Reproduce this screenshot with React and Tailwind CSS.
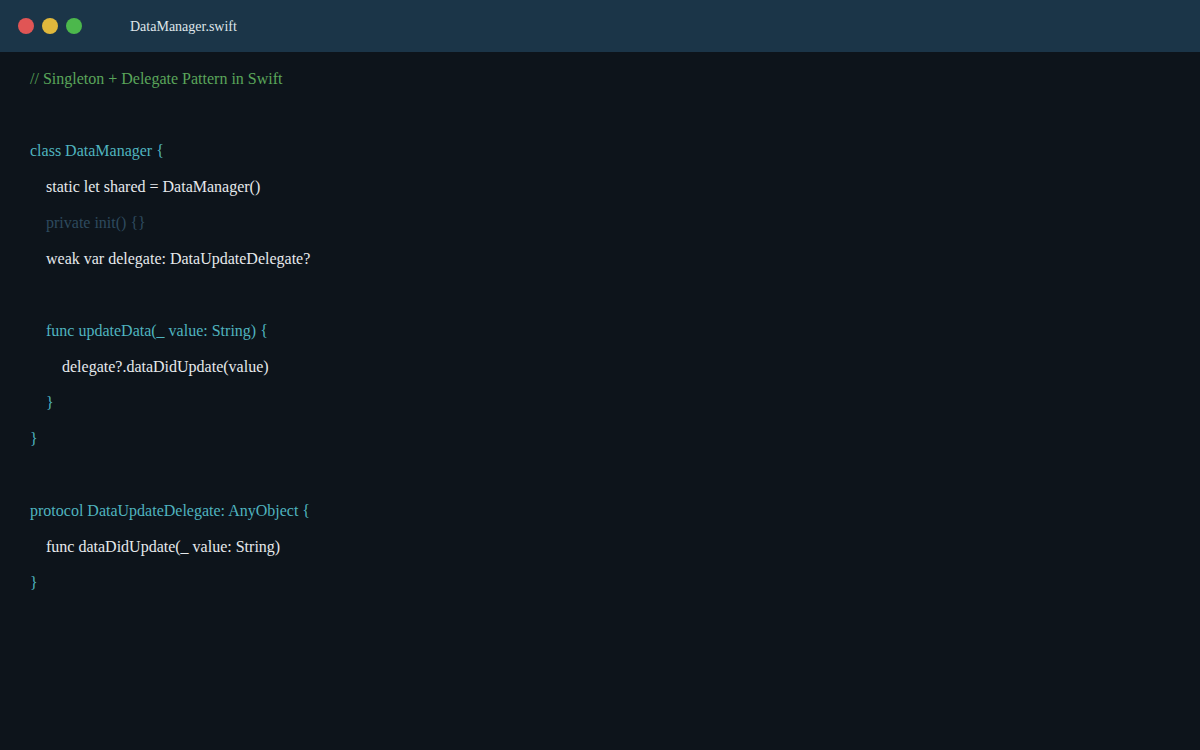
export default function App() {
  const C = "text-[#4fb3bf]", W = "text-[#e6e9ec]", G = "text-[#5aa55a]", D = "text-[#2d4a5e]";
  const lines = [
    [0, G, "// Singleton + Delegate Pattern in Swift"],
    [0, W, ""],
    [0, C, "class DataManager {"],
    [1, W, "static let shared = DataManager()"],
    [1, D, "private init() {}"],
    [1, W, "weak var delegate: DataUpdateDelegate?"],
    [0, W, ""],
    [1, C, "func updateData(_ value: String) {"],
    [2, W, "delegate?.dataDidUpdate(value)"],
    [1, C, "}"],
    [0, C, "}"],
    [0, W, ""],
    [0, C, "protocol DataUpdateDelegate: AnyObject {"],
    [1, W, "func dataDidUpdate(_ value: String)"],
    [0, C, "}"],
  ];
  const ind = ["pl-0", "pl-4", "pl-8"];
  return (
    <div className="w-[1200px] h-[750px] bg-[#0d141b] flex flex-col" style={{ fontFamily: '"Liberation Serif", serif' }}>
      <div className="h-[52px] bg-[#1b3548] flex items-center pl-[18px] shrink-0">
        <div className="flex gap-2">
          <div className="w-4 h-4 rounded-full bg-[#e05555]" />
          <div className="w-4 h-4 rounded-full bg-[#e0b83c]" />
          <div className="w-4 h-4 rounded-full bg-[#4cb84c]" />
        </div>
        <div className="ml-[48px] text-[14px] text-[#dfe5ea]">DataManager.swift</div>
      </div>
      <div className="pt-[9px] pl-[30px] text-[16px] leading-[36px]">
        {lines.map(([l, c, t], i) => (
          <div key={i} className={`${ind[l]} ${c} h-[36px] whitespace-pre`}>{t}</div>
        ))}
      </div>
    </div>
  );
}
